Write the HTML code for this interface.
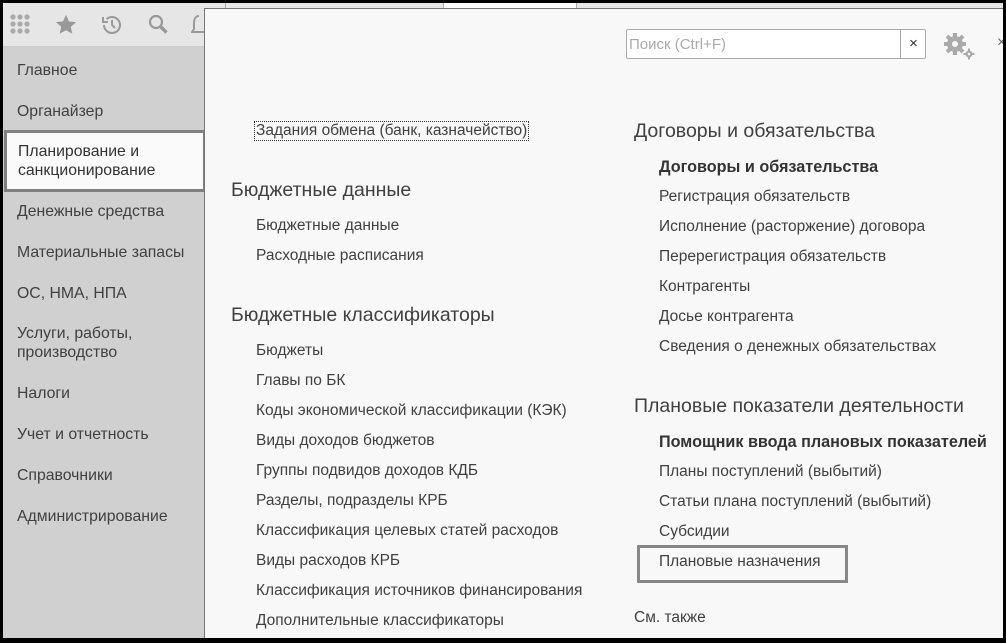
<!DOCTYPE html>
<html><head><meta charset="utf-8"><style>
*{margin:0;padding:0;box-sizing:border-box}
body{width:1006px;height:643px;overflow:hidden;background:#000;font-family:"Liberation Sans",Arial,sans-serif;position:relative}
#frame{position:absolute;left:3px;top:3px;width:1000px;height:635px;background:#f8f8f8;overflow:hidden}
#top{position:absolute;left:0;top:0;width:1000px;height:44px;background:#e6e6e6;border-bottom:1px solid #ccc}
#side{position:absolute;left:0;top:44px;width:201px;height:600px;background:#d0d0d0}
.si{position:absolute;left:14px;font-size:15.8px;color:#404040;line-height:19px;white-space:nowrap}
#sel{position:absolute;left:1px;top:127px;width:202px;height:62px;background:#fafafa;border:3px solid #808080}
#panel{position:absolute;left:201px;top:5px;width:800px;height:640px;background:#f8f8f8;border-left:1px solid #777;border-top:1px solid #777}
.t{position:absolute;font-size:15.5px;color:#404040;white-space:nowrap}
.h{position:absolute;font-size:19.5px;color:#404040;white-space:nowrap}
.b{font-weight:bold;color:#333;font-size:16.2px}
</style></head><body><div id="frame">
<div id="top">
<svg style="position:absolute;left:7px;top:11px" width="22" height="22" viewBox="0 0 22 22" fill="#aaa"><circle cx="3" cy="3" r="2.6"/><circle cx="10" cy="3" r="2.6"/><circle cx="17" cy="3" r="2.6"/><circle cx="3" cy="10" r="2.6"/><circle cx="10" cy="10" r="2.6"/><circle cx="17" cy="10" r="2.6"/><circle cx="3" cy="17" r="2.6"/><circle cx="10" cy="17" r="2.6"/><circle cx="17" cy="17" r="2.6"/></svg>
<svg style="position:absolute;left:52px;top:11px" width="22" height="22" viewBox="0 0 24 24" fill="#999"><path d="M12 1l3.3 7 7.7.8-5.8 5.2 1.7 7.6L12 17.7 5.1 21.6l1.7-7.6L1 8.8 8.7 8z"/></svg>
<svg style="position:absolute;left:97px;top:10px" width="24" height="24" viewBox="0 0 24 24" fill="none" stroke="#999" stroke-width="2"><path d="M4 12a8 8 0 1 0 2.5-5.8"/><path d="M3 4v5h5" /><path d="M12 7v5l3 3"/></svg>
<svg style="position:absolute;left:144px;top:10px" width="24" height="24" viewBox="0 0 24 24" fill="none" stroke="#999" stroke-width="2.2"><circle cx="9" cy="9" r="6"/><path d="M13.5 13.5l6 6" stroke-width="3.5"/></svg>
<svg style="position:absolute;left:188px;top:10px" width="16" height="24" viewBox="0 0 16 24" fill="none" stroke="#999" stroke-width="2"><path d="M8 3c-4 0-5 4-5 7v6l-2 3h15"/></svg>
<div style="position:absolute;left:222px;top:0;width:1px;height:5px;background:#aaa"></div>
<div style="position:absolute;left:440px;top:0;width:134px;height:5px;background:#fff;border-left:1px solid #aaa;border-right:1px solid #aaa"></div>
</div>
<div id="side">
<div class="si" style="top:14px">Главное</div>
<div class="si" style="top:55px">Органайзер</div>
<div class="si" style="top:155px">Денежные средства</div>
<div class="si" style="top:196px">Материальные запасы</div>
<div class="si" style="top:237px">ОС, НМА, НПА</div>
<div class="si" style="top:277px">Услуги, работы,<br>производство</div>
<div class="si" style="top:337px">Налоги</div>
<div class="si" style="top:378px">Учет и отчетность</div>
<div class="si" style="top:419px">Справочники</div>
<div class="si" style="top:460px">Администрирование</div>
</div>
<div id="sel"><div class="si" style="left:11px;top:9px;color:#333">Планирование и<br>санкционирование</div></div>
<div id="panel">
<div style="position:absolute;left:421px;top:20px;width:300px;height:30px;background:#fff;border:1px solid #aaa;border-radius:2px">
<span style="position:absolute;left:2px;top:6px;font-size:15px;color:#aaa">Поиск (Ctrl+F)</span>
<span style="position:absolute;left:273px;top:0;width:26px;height:28px;border-left:1px solid #aaa;text-align:center;line-height:28px;font-size:15px;color:#333">×</span></div>
<svg style="position:absolute;left:737px;top:22px" width="36" height="30" viewBox="0 0 36 30"><g fill="#aaa"><circle cx="13" cy="13" r="8"/><g stroke="#aaa" stroke-width="4"><path d="M13 2v22M2 13h22M5 5l16 16M21 5L5 21"/></g><circle cx="13" cy="13" r="3" fill="#f8f8f8"/><circle cx="27" cy="23" r="3.5"/><g stroke="#aaa" stroke-width="2"><path d="M27 17.5v11M21.5 23h11"/></g><circle cx="27" cy="23" r="1.3" fill="#f8f8f8"/></g></svg>
<div class="t" style="left:792px;top:25px;color:#666">×</div>
<div class="t" style="left:49px;top:112px;border:1px dotted #333;padding:0 1px">Задания обмена (банк, казначейство)</div>
<div class="h" style="left:26px;top:170px">Бюджетные данные</div>
<div class="t" style="left:51px;top:208px">Бюджетные данные</div>
<div class="t" style="left:51px;top:238px">Расходные расписания</div>
<div class="h" style="left:26px;top:295px">Бюджетные классификаторы</div>
<div class="t" style="left:51px;top:333px">Бюджеты</div>
<div class="t" style="left:51px;top:363px">Главы по БК</div>
<div class="t" style="left:51px;top:393px">Коды экономической классификации (КЭК)</div>
<div class="t" style="left:51px;top:423px">Виды доходов бюджетов</div>
<div class="t" style="left:51px;top:453px">Группы подвидов доходов КДБ</div>
<div class="t" style="left:51px;top:483px">Разделы, подразделы КРБ</div>
<div class="t" style="left:51px;top:513px">Классификация целевых статей расходов</div>
<div class="t" style="left:51px;top:543px">Виды расходов КРБ</div>
<div class="t" style="left:51px;top:573px">Классификация источников финансирования</div>
<div class="t" style="left:51px;top:603px">Дополнительные классификаторы</div>
<div class="h" style="left:429px;top:111px">Договоры и обязательства</div>
<div class="t b" style="left:454px;top:149px">Договоры и обязательства</div>
<div class="t" style="left:454px;top:179px">Регистрация обязательств</div>
<div class="t" style="left:454px;top:209px">Исполнение (расторжение) договора</div>
<div class="t" style="left:454px;top:239px">Перерегистрация обязательств</div>
<div class="t" style="left:454px;top:269px">Контрагенты</div>
<div class="t" style="left:454px;top:299px">Досье контрагента</div>
<div class="t" style="left:454px;top:329px">Сведения о денежных обязательствах</div>
<div class="h" style="left:429px;top:386px">Плановые показатели деятельности</div>
<div class="t b" style="left:454px;top:424px">Помощник ввода плановых показателей</div>
<div class="t" style="left:454px;top:454px">Планы поступлений (выбытий)</div>
<div class="t" style="left:454px;top:484px">Статьи плана поступлений (выбытий)</div>
<div class="t" style="left:454px;top:514px">Субсидии</div>
<div style="position:absolute;left:432px;top:536px;width:211px;height:38px;border:3px solid #888"></div>
<div class="t" style="left:454px;top:544px">Плановые назначения</div>
<div class="t" style="left:429px;top:600px">См. также</div>
</div>
</div></body></html>
